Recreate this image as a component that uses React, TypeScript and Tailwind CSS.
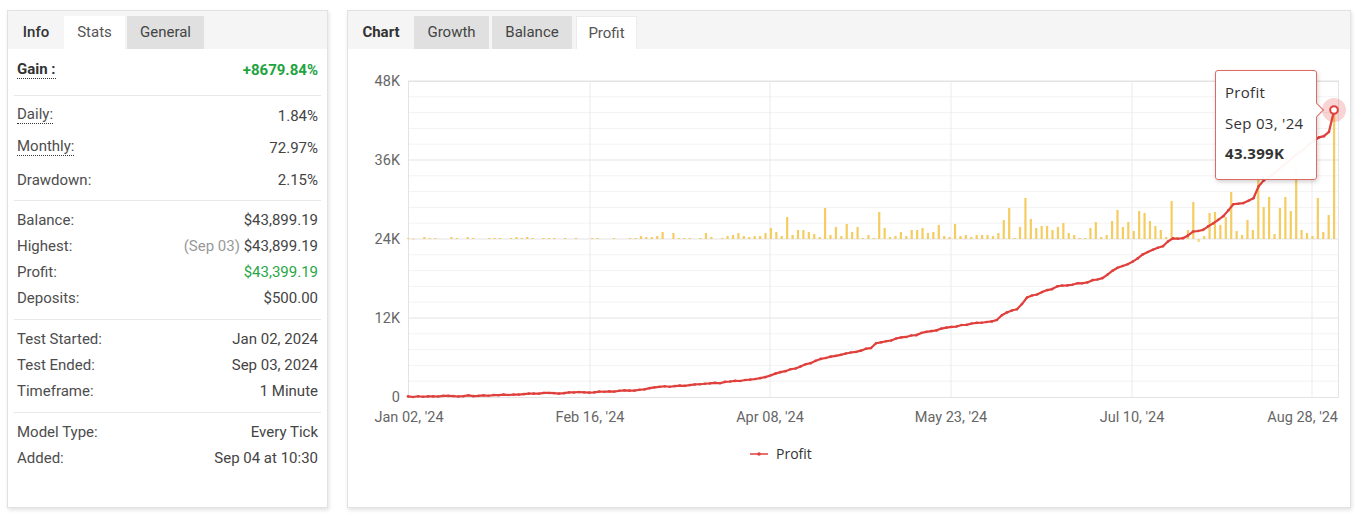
import React from "react";

// svg origin inside the chart card body
const OX = 348;
const OY = 49;

const barHeights = [
  1, 0.5, 0, 2, 1, 1, 0, 0, 2, 1, 0, 2, 1, 0, 0, 1, 1, 1, 0, 1, 2, 1, 2, 1, 0,
  1, 1, 1, 0, 1, 0, 1, 0, 0, 1, 1, 0, 0, 1, 0, 0, 1, 1, 3, 2, 2, 3, 7, 0, 6, 1,
  1, 1, 0, 1, 6, 2, 0, 1, 3, 4, 6, 3, 2, 3, 3, 6, 11, 7, 3, 22, 4, 9, 9, 7, 5,
  2, 31, 4, 12, 3, 15, 7, 12, 1, 4, 1, 27, 11, 2, 3, 7, 3, 9, 9, 11, 6, 7, 14,
  3, 2, 15, 3, 4, 2, 4, 4, 4, 3, 6, 19, 31, 1, 12, 41, 20, 11, 13, 13, 9, 12,
  16, 6, 4, 1, 1, 11, 17, 2, 4, 18, 29, 12, 17, 8, 28, 26, 18, 13, 9, 2, 38, 2,
  2, 9, 37, -3, 3, 26, 27, 14, 22, 47, 8, 4, 19, 9, 64, 32, 42, 5, 31, 42, 28,
  75, 9, 6, 3, 41, 7, 24, 128,
];

const keyPts: [number, number][] = [
  [408, 397], [500, 395], [590, 392], [640, 390], [660, 387], [707, 384],
  [730, 382], [757, 379], [770, 376], [782, 372], [800, 367], [818, 360],
  [871, 348], [876, 343], [906, 337], [949, 327], [995, 321], [1006, 312],
  [1016, 310], [1027, 298], [1059, 286], [1084, 283], [1105, 277],
  [1116, 268], [1133, 262], [1144, 253], [1165, 245], [1171, 239],
  [1185, 238], [1192, 231], [1202, 231], [1213, 223], [1226, 215],
  [1231, 205], [1243, 203], [1254, 198], [1259, 185], [1265, 180],
  [1290, 160], [1317, 138], [1327, 135], [1332, 127], [1334, 111],
];

const interp = (x: number) => {
  for (let i = 1; i < keyPts.length; i++) {
    const [x0, y0] = keyPts[i - 1];
    const [x1, y1] = keyPts[i];
    if (x <= x1) return y0 + ((y1 - y0) * (x - x0)) / (x1 - x0 || 1);
  }
  return keyPts[keyPts.length - 1][1];
};

const profitPts = Array.from({ length: 185 }, (_, i) => {
  const x = 408 + (i * 926) / 184;
  const n = Math.sin(i * 12.9898) * 43758.5453;
  const jitter = (n - Math.floor(n) - 0.5) * 1.2;
  let y = interp(x);
  if (x < 1328) y += jitter;
  return [x - OX, Math.min(y, 397) - OY] as [number, number];
});

const yTicks = [
  { label: "48K", y: 81 },
  { label: "36K", y: 160 },
  { label: "24K", y: 239 },
  { label: "12K", y: 318 },
  { label: "0", y: 397 },
];

const xTicks = [
  { label: "Jan 02, '24", x: 409 },
  { label: "Feb 16, '24", x: 590 },
  { label: "Apr 08, '24", x: 770 },
  { label: "May 23, '24", x: 951 },
  { label: "Jul 10, '24", x: 1132 },
  { label: "Aug 28, '24", x: 1312 },
];

const ProfitChart = () => {
  const minor = Array.from({ length: 20 }, (_, i) => 81 + i * 15.8);

  return (
    <svg width="1002" height="457" className="block">
      {/* grid */}
      {minor.map((y, i) => (
        <line
          key={i}
          x1={408 - OX}
          x2={1339 - OX}
          y1={y - OY}
          y2={y - OY}
          stroke={i % 5 === 0 ? "#e3e3e3" : "#f3f3f3"}
          strokeWidth="1"
        />
      ))}
      {xTicks.slice(1).map((t) => (
        <line
          key={t.label}
          x1={t.x - OX}
          x2={t.x - OX}
          y1={81 - OY}
          y2={397 - OY}
          stroke="#ebebeb"
        />
      ))}
      <rect
        x={408.5 - OX}
        y={81.5 - OY}
        width={930}
        height={316}
        fill="none"
        stroke="#e3e3e3"
      />

      {/* daily bars */}
      {barHeights.map((h, k) => {
        const x = 408 + k * (926 / 171) - OX;
        if (h === 0) return null;
        const top = h > 0 ? 239 - h : 239;
        return (
          <rect
            key={k}
            x={x - 1}
            y={top - OY}
            width="2.2"
            height={Math.max(Math.abs(h), 1)}
            fill="#f3c74f"
            opacity={h < 1 ? 0.7 : 0.9}
          />
        );
      })}

      {/* profit line */}
      <polyline
        points={profitPts.map(([x, y]) => `${x},${y}`).join(" ")}
        fill="none"
        stroke="#e0403c"
        strokeWidth="2.2"
        strokeLinejoin="round"
      />
      {profitPts.map(([x, y], i) => (
        <circle key={i} cx={x} cy={y} r="1.3" fill="#e0403c" />
      ))}

      {/* hover marker */}
      <circle cx={1334 - OX} cy={110 - OY} r="12" fill="#e0403c" opacity="0.22" />
      <circle
        cx={1334 - OX}
        cy={110 - OY}
        r="3.8"
        fill="#fff"
        stroke="#e0403c"
        strokeWidth="2"
      />

      {/* y labels */}
      {yTicks.map((t) => (
        <text
          key={t.label}
          x={400 - OX}
          y={t.y - OY + 5}
          textAnchor="end"
          fontSize="14.5"
          fill="#666"
          fontFamily="Roboto, sans-serif"
        >
          {t.label}
        </text>
      ))}

      {/* x labels */}
      {xTicks.map((t, i) => (
        <text
          key={t.label}
          x={(i === 5 ? 1338 : t.x) - OX}
          y={422 - OY}
          textAnchor={i === 5 ? "end" : "middle"}
          fontSize="14.5"
          fill="#666"
          fontFamily="Roboto, sans-serif"
        >
          {t.label}
        </text>
      ))}

      {/* legend */}
      <line
        x1={750 - OX}
        x2={768 - OX}
        y1={454 - OY}
        y2={454 - OY}
        stroke="#e0403c"
        strokeWidth="1.5"
      />
      <circle cx={759 - OX} cy={454 - OY} r="1.8" fill="#e0403c" />
      <text
        x={776 - OX}
        y={459 - OY}
        fontSize="14"
        fill="#333"
        fontFamily="'Open Sans', sans-serif"
      >
        Profit
      </text>
    </svg>
  );
};

interface StatRowProps {
  label: string;
  value: React.ReactNode;
  underline?: boolean;
  tall?: boolean;
  valueClass?: string;
}

const StatRow: React.FC<StatRowProps> = ({
  label,
  value,
  underline,
  tall,
  valueClass,
}) => (
  <div
    className={`flex items-center justify-between px-[3px] ${
      tall ? "h-[32px]" : "h-[26px]"
    }`}
  >
    <span
      className={`text-[15px] text-[#4d4d4d] ${
        underline ? "border-b border-dotted border-[#333] leading-[18px] -mt-[4px]" : ""
      }`}
    >
      {label}
    </span>
    <span className={`text-[15px] ${valueClass ?? "text-[#444]"}`}>
      {value}
    </span>
  </div>
);

const Divider = () => <div className="h-px bg-[#e8e8e8]" />;

const StatsCard = () => (
  <div className="w-[321px] h-[498px] bg-white border border-[#e2e2e2] shadow-[1px_2px_4px_rgba(0,0,0,0.12)] flex flex-col">
    <div className="h-[38px] bg-[#f5f5f5] flex items-end">
      <div className="w-[56px] h-[33px] flex items-center justify-center text-[15px] font-medium text-[#333]">
        Info
      </div>
      <div className="w-[61px] h-[33px] bg-white flex items-center justify-center text-[15px] text-[#555]">
        Stats
      </div>
      <div className="ml-[2px] w-[77px] h-[33px] bg-[#e0e0e0] flex items-center justify-center text-[15px] text-[#444]">
        General
      </div>
    </div>

    <div className="px-[6px]">
      <div className="h-[46px] pt-[11px] px-[3px] flex justify-between items-start">
        <span className="text-[15px] font-bold text-[#333] leading-[18px] border-b border-dotted border-[#333]">
          Gain :
        </span>
        <span className="text-[15px] font-bold text-[#1fa33f] leading-[20px]">
          +8679.84%
        </span>
      </div>
      <Divider />
      <div className="pt-[4px] pb-[4px]">
        <StatRow label="Daily:" value="1.84%" underline tall />
        <StatRow label="Monthly:" value="72.97%" underline tall />
        <StatRow label="Drawdown:" value="2.15%" tall />
      </div>
      <Divider />
      <div className="pt-[6px] pb-[8px]">
        <StatRow label="Balance:" value="$43,899.19" />
        <StatRow
          label="Highest:"
          value={
            <>
              <span className="text-[#999]">(Sep 03)</span> $43,899.19
            </>
          }
        />
        <StatRow label="Profit:" value="$43,399.19" valueClass="text-[#27a646]" />
        <StatRow label="Deposits:" value="$500.00" />
      </div>
      <Divider />
      <div className="pt-[6px] pb-[8px]">
        <StatRow label="Test Started:" value="Jan 02, 2024" />
        <StatRow label="Test Ended:" value="Sep 03, 2024" />
        <StatRow label="Timeframe:" value="1 Minute" />
      </div>
      <Divider />
      <div className="pt-[6px]">
        <StatRow label="Model Type:" value="Every Tick" />
        <StatRow label="Added:" value="Sep 04 at 10:30" />
      </div>
    </div>
  </div>
);

const ChartCard = () => (
  <div className="relative w-[1004px] h-[498px] bg-white border border-[#e2e2e2] shadow-[1px_2px_4px_rgba(0,0,0,0.12)] flex flex-col">
    <div className="h-[38px] bg-[#f5f5f5] flex items-end">
      <div className="w-[66px] h-[33px] flex items-center justify-center text-[15px] font-bold text-[#333]">
        Chart
      </div>
      <div className="w-[75px] h-[33px] bg-[#e0e0e0] flex items-center justify-center text-[15px] text-[#444]">
        Growth
      </div>
      <div className="ml-[3px] w-[80px] h-[33px] bg-[#e0e0e0] flex items-center justify-center text-[15px] text-[#444]">
        Balance
      </div>
      <div className="ml-[4px] w-[61px] h-[33px] bg-white border-t border-x border-[#ebebeb] flex items-center justify-center text-[15px] text-[#555]">
        Profit
      </div>
    </div>

    <ProfitChart />

    {/* tooltip */}
    <div className="absolute left-[867px] top-[59px] w-[102px] h-[110px] bg-white/95 border border-[#dc6a66] rounded-[3px] shadow-[1px_2px_4px_rgba(0,0,0,0.18)] pl-[9px] pt-[6px] font-['Open_Sans',sans-serif] text-[15px] tracking-[0.3px] text-[#333] leading-[30.5px]">
      <div>Profit</div>
      <div>Sep 03, &#39;24</div>
      <div className="font-bold">43.399K</div>
      <div className="absolute right-[-6px] top-[34px] w-[10px] h-[10px] bg-white border-t border-r border-[#dc6a66] rotate-45" />
    </div>
  </div>
);

export default function App() {
  return (
    <div className="w-[1356px] h-[516px] bg-white flex gap-[19px] pt-[10px] pl-[7px] font-['Roboto',sans-serif]">
      <StatsCard />
      <ChartCard />
    </div>
  );
}
